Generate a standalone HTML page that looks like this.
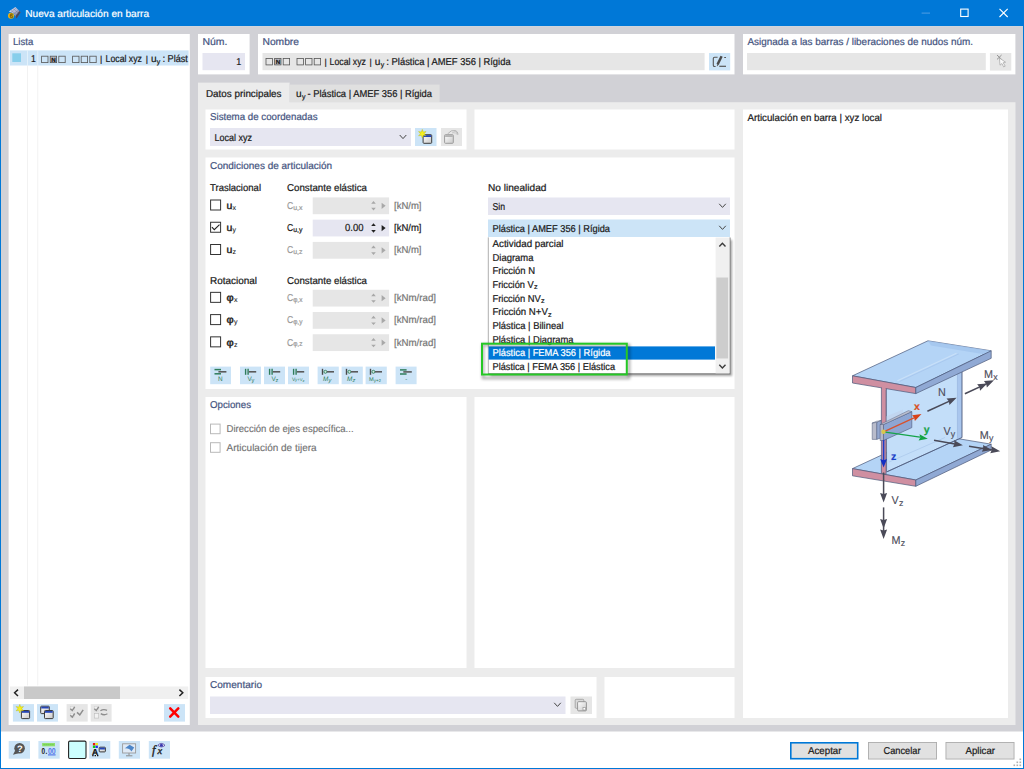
<!DOCTYPE html>
<html lang="es"><head><meta charset="utf-8"><title>Nueva articulación en barra</title>
<style>
html,body{margin:0;padding:0;background:#fff;overflow:hidden}
body{width:1024px;height:769px;position:relative}
svg{position:absolute;left:0;top:0;display:block;font-family:'Liberation Sans', sans-serif}
text{white-space:pre;text-rendering:geometricPrecision}
</style></head><body>
<svg width="1024" height="769" viewBox="0 0 1024 769">
<rect x="0" y="0" width="1024" height="769" fill="#0078d7" />
<rect x="1" y="26.2" width="1022" height="741.8" fill="#ffffff" />
<rect x="1" y="26.2" width="1022" height="705.3" fill="#d1d1d6" />
<text x="25.3" y="16.9" font-size="10.2" fill="#ffffff" text-anchor="start" textLength="123.8" lengthAdjust="spacingAndGlyphs" stroke="#ffffff" stroke-width="0.2">Nueva articulación en barra</text>
<rect x="8.6" y="34" width="181.2" height="691" fill="#ffffff" />
<text x="13" y="45" font-size="10" fill="#46557f" text-anchor="start" textLength="20.2" lengthAdjust="spacingAndGlyphs" stroke="#46557f" stroke-width="0.22" >Lista</text>
<rect x="10" y="50.4" width="178.6" height="15.1" fill="#cce4f7" />
<rect x="27" y="65.5" width="0.8" height="620.0" fill="#efefef" />
<rect x="37.4" y="65.5" width="0.8" height="620.0" fill="#efefef" />
<rect x="27" y="50.4" width="0.8" height="15.1" fill="#e9f4fc" />
<rect x="37.4" y="50.4" width="0.8" height="15.1" fill="#e9f4fc" />
<rect x="12.3" y="53.3" width="8.7" height="8.7" fill="#87ceeb" />
<text x="31" y="62" font-size="10" fill="#1a1a1a" text-anchor="start" textLength="4.8" lengthAdjust="spacingAndGlyphs" stroke="#1a1a1a" stroke-width="0.22" >1</text>
<rect x="198" y="34" width="51.6" height="40.4" fill="#ffffff" />
<text x="202.5" y="45.2" font-size="10" fill="#46557f" text-anchor="start" textLength="25" lengthAdjust="spacingAndGlyphs" stroke="#46557f" stroke-width="0.22" >Núm.</text>
<rect x="202.5" y="53" width="42.5" height="17.2" fill="#e6e6f1" />
<text x="236.2" y="65.1" font-size="10" fill="#1a1a1a" text-anchor="start" textLength="5" lengthAdjust="spacingAndGlyphs" stroke="#1a1a1a" stroke-width="0.22" >1</text>
<rect x="258" y="34" width="476.5" height="40.4" fill="#ffffff" />
<text x="262.5" y="45.2" font-size="10" fill="#46557f" text-anchor="start" textLength="36.5" lengthAdjust="spacingAndGlyphs" stroke="#46557f" stroke-width="0.22" >Nombre</text>
<rect x="262.5" y="53" width="442.1" height="17.2" fill="#e6e6e6" />
<rect x="709" y="53" width="21.2" height="17.4" fill="#cce4f7" />
<rect x="743" y="34" width="272.4" height="40.4" fill="#ffffff" />
<text x="747.5" y="45.2" font-size="10" fill="#46557f" text-anchor="start" textLength="225.5" lengthAdjust="spacingAndGlyphs" stroke="#46557f" stroke-width="0.22" >Asignada a las barras / liberaciones de nudos núm.</text>
<rect x="747" y="53" width="238.8" height="17.2" fill="#e6e6e6" />
<rect x="989.9" y="53" width="21.4" height="17.6" fill="#e6e6e6" />
<rect x="198" y="82.6" width="91.6" height="20.4" fill="#ececec" />
<rect x="289.6" y="84.6" width="150.0" height="17.6" fill="#e0e0e0" />
<rect x="198" y="102.2" width="817.5" height="622.8" fill="#ececec" />
<text x="206" y="97" font-size="10" fill="#1a1a1a" text-anchor="start" textLength="75.5" lengthAdjust="spacingAndGlyphs" stroke="#1a1a1a" stroke-width="0.22" >Datos principales</text>
<rect x="205.5" y="109.5" width="261.0" height="40.0" fill="#ffffff" />
<rect x="474.5" y="109.5" width="260.0" height="40.0" fill="#ffffff" />
<rect x="205.5" y="157.5" width="529.0" height="231.5" fill="#ffffff" />
<rect x="205.5" y="397" width="261.0" height="271" fill="#ffffff" />
<rect x="474.5" y="397" width="260.0" height="271" fill="#ffffff" />
<rect x="205.5" y="677" width="391.0" height="41" fill="#ffffff" />
<rect x="604.5" y="677" width="130.0" height="41" fill="#ffffff" />
<rect x="743" y="109.5" width="265" height="608.5" fill="#ffffff" />
<text x="210" y="120" font-size="10" fill="#46557f" text-anchor="start" textLength="107.5" lengthAdjust="spacingAndGlyphs" stroke="#46557f" stroke-width="0.22" >Sistema de coordenadas</text>
<rect x="210" y="128" width="201" height="18" fill="#e6e6f1" />
<text x="214.5" y="140.5" font-size="10" fill="#1a1a1a" text-anchor="start" textLength="37.5" lengthAdjust="spacingAndGlyphs" stroke="#1a1a1a" stroke-width="0.22" >Local xyz</text>
<rect x="415" y="128" width="21.5" height="18" fill="#cce4f7" />
<rect x="441" y="128" width="21" height="18" fill="#e6e6e6" />
<text x="210" y="168.8" font-size="10" fill="#46557f" text-anchor="start" textLength="122" lengthAdjust="spacingAndGlyphs" stroke="#46557f" stroke-width="0.22" >Condiciones de articulación</text>
<text x="210" y="191.3" font-size="10" fill="#1a1a1a" text-anchor="start" textLength="51" lengthAdjust="spacingAndGlyphs" stroke="#1a1a1a" stroke-width="0.22" >Traslacional</text>
<text x="287" y="191.3" font-size="10" fill="#1a1a1a" text-anchor="start" textLength="80" lengthAdjust="spacingAndGlyphs" stroke="#1a1a1a" stroke-width="0.22" >Constante elástica</text>
<text x="210" y="283.8" font-size="10" fill="#1a1a1a" text-anchor="start" textLength="47" lengthAdjust="spacingAndGlyphs" stroke="#1a1a1a" stroke-width="0.22" >Rotacional</text>
<text x="287" y="283.8" font-size="10" fill="#1a1a1a" text-anchor="start" textLength="80" lengthAdjust="spacingAndGlyphs" stroke="#1a1a1a" stroke-width="0.22" >Constante elástica</text>
<text x="488" y="191.3" font-size="10" fill="#1a1a1a" text-anchor="start" textLength="58.5" lengthAdjust="spacingAndGlyphs" stroke="#1a1a1a" stroke-width="0.22" >No linealidad</text>
<text x="210" y="408.3" font-size="10" fill="#46557f" text-anchor="start" textLength="41" lengthAdjust="spacingAndGlyphs" stroke="#46557f" stroke-width="0.22" >Opciones</text>
<text x="210" y="687.5" font-size="10" fill="#46557f" text-anchor="start" textLength="52" lengthAdjust="spacingAndGlyphs" stroke="#46557f" stroke-width="0.22" >Comentario</text>
<rect x="210" y="696.5" width="355.5" height="17.5" fill="#e6e6f1" />
<rect x="570.5" y="696.5" width="21.5" height="17.5" fill="#e6e6e6" />
<text x="747.5" y="121.3" font-size="10" fill="#1a1a1a" text-anchor="start" textLength="134.5" lengthAdjust="spacingAndGlyphs" stroke="#1a1a1a" stroke-width="0.22" >Articulación en barra | xyz local</text>
<rect x="41.6" y="56.199999999999996" width="6.4" height="6.4" fill="none" stroke="#555" stroke-width="0.8"/>
<rect x="50.2" y="56.199999999999996" width="6.4" height="6.4" fill="#bdbdc4" stroke="#555" stroke-width="0.8"/>
<rect x="58.8" y="56.199999999999996" width="6.4" height="6.4" fill="none" stroke="#555" stroke-width="0.8"/>
<rect x="72.6" y="56.199999999999996" width="6.4" height="6.4" fill="none" stroke="#555" stroke-width="0.8"/>
<rect x="81.2" y="56.199999999999996" width="6.4" height="6.4" fill="none" stroke="#555" stroke-width="0.8"/>
<rect x="89.8" y="56.199999999999996" width="6.4" height="6.4" fill="none" stroke="#555" stroke-width="0.8"/>
<text x="51.3" y="61.7" font-size="6.2" fill="#111" text-anchor="start" stroke="#111" stroke-width="0.22" font-weight="bold">N</text>
<text x="100" y="62" font-size="8.6" fill="#1a1a1a" text-anchor="start" stroke="#1a1a1a" stroke-width="0.22" >|</text>
<text x="105.6" y="62" font-size="10" fill="#1a1a1a" text-anchor="start" textLength="36.3" lengthAdjust="spacingAndGlyphs" stroke="#1a1a1a" stroke-width="0.22" >Local xyz</text>
<text x="145.7" y="62" font-size="8.6" fill="#1a1a1a" text-anchor="start" stroke="#1a1a1a" stroke-width="0.22" >|</text>
<text x="150.9" y="62" font-size="10" fill="#1a1a1a" text-anchor="start" textLength="5.6" lengthAdjust="spacingAndGlyphs" stroke="#1a1a1a" stroke-width="0.22" >u</text>
<text x="156.8" y="63.5" font-size="6.9" fill="#1a1a1a" text-anchor="start" stroke="#1a1a1a" stroke-width="0.22" >y</text>
<text x="162.4" y="62" font-size="10" fill="#1a1a1a" text-anchor="start" stroke="#1a1a1a" stroke-width="0.22" >:</text>
<text x="167.6" y="62" font-size="10" fill="#1a1a1a" text-anchor="start" textLength="20.3" lengthAdjust="spacingAndGlyphs" stroke="#1a1a1a" stroke-width="0.22" >Plást</text>
<rect x="266.0" y="58.5" width="6.4" height="6.4" fill="none" stroke="#555" stroke-width="0.8"/>
<rect x="274.6" y="58.5" width="6.4" height="6.4" fill="#bdbdc4" stroke="#555" stroke-width="0.8"/>
<rect x="283.2" y="58.5" width="6.4" height="6.4" fill="none" stroke="#555" stroke-width="0.8"/>
<rect x="297.0" y="58.5" width="6.4" height="6.4" fill="none" stroke="#555" stroke-width="0.8"/>
<rect x="305.6" y="58.5" width="6.4" height="6.4" fill="none" stroke="#555" stroke-width="0.8"/>
<rect x="314.2" y="58.5" width="6.4" height="6.4" fill="none" stroke="#555" stroke-width="0.8"/>
<text x="275.7" y="64.0" font-size="6.2" fill="#111" text-anchor="start" stroke="#111" stroke-width="0.22" font-weight="bold">N</text>
<text x="324.6" y="65.1" font-size="8.6" fill="#1a1a1a" text-anchor="start" stroke="#1a1a1a" stroke-width="0.22" >|</text>
<text x="329.6" y="65.1" font-size="10" fill="#1a1a1a" text-anchor="start" textLength="36.3" lengthAdjust="spacingAndGlyphs" stroke="#1a1a1a" stroke-width="0.22" >Local xyz</text>
<text x="369.5" y="65.1" font-size="8.6" fill="#1a1a1a" text-anchor="start" stroke="#1a1a1a" stroke-width="0.22" >|</text>
<text x="374.8" y="65.1" font-size="10" fill="#1a1a1a" text-anchor="start" textLength="5.6" lengthAdjust="spacingAndGlyphs" stroke="#1a1a1a" stroke-width="0.22" >u</text>
<text x="380.7" y="66.6" font-size="6.9" fill="#1a1a1a" text-anchor="start" stroke="#1a1a1a" stroke-width="0.22" >y</text>
<text x="386.2" y="65.1" font-size="10" fill="#1a1a1a" text-anchor="start" stroke="#1a1a1a" stroke-width="0.22" >:</text>
<text x="391.6" y="65.1" font-size="10" fill="#1a1a1a" text-anchor="start" textLength="119" lengthAdjust="spacingAndGlyphs" stroke="#1a1a1a" stroke-width="0.22" >Plástica | AMEF 356 | Rígida</text>
<text x="296" y="97" font-size="10" fill="#1a1a1a" text-anchor="start" textLength="5.6" lengthAdjust="spacingAndGlyphs" stroke="#1a1a1a" stroke-width="0.22" >u</text>
<text x="301.9" y="98.5" font-size="6.9" fill="#1a1a1a" text-anchor="start" stroke="#1a1a1a" stroke-width="0.22" >y</text>
<text x="307.6" y="97" font-size="10" fill="#1a1a1a" text-anchor="start" textLength="124.4" lengthAdjust="spacingAndGlyphs" stroke="#1a1a1a" stroke-width="0.22" >- Plástica | AMEF 356 | Rígida</text>
<path d="M399.7 135.0 L403 138.60000000000002 L406.3 135.0" fill="none" stroke="#444" stroke-width="1.0"/>
<path d="M554.2 702.8000000000001 L557.5 706.4 L560.8 702.8000000000001" fill="none" stroke="#444" stroke-width="1.0"/>
<rect x="210.6" y="200.0" width="10" height="10" fill="#fff" stroke="#333" stroke-width="1.0"/>
<text x="226.6" y="208.8" font-size="10" fill="#1a1a1a" text-anchor="start" textLength="5.8" lengthAdjust="spacingAndGlyphs" stroke="#1a1a1a" stroke-width="0.4">u</text>
<text x="232.6" y="209.8" font-size="7" fill="#1a1a1a" text-anchor="start" stroke="#1a1a1a" stroke-width="0.1">x</text>
<text x="287" y="208.8" font-size="10" fill="#9a9a9a" text-anchor="start" textLength="6.2" lengthAdjust="spacingAndGlyphs" stroke="#9a9a9a" stroke-width="0.22" >C</text>
<text x="293.2" y="209.6" font-size="7" fill="#9a9a9a" text-anchor="start" textLength="9.2" lengthAdjust="spacingAndGlyphs" stroke="#9a9a9a" stroke-width="0.22" >u,x</text>
<rect x="312.7" y="197.4" width="76.4" height="16.8" fill="#e6e6e6" />
<path d="M371.2 203.80 l2.3 -2.7 l2.3 2.7 z M371.2 207.80 l2.3 2.7 l2.3 -2.7 z" fill="#a8a8a8"/>
<path d="M381.6 202.70 l4 3.1 l-4 3.1 z" fill="#a8a8a8"/>
<text x="394" y="208.8" font-size="10" fill="#777" text-anchor="start" textLength="27.5" lengthAdjust="spacingAndGlyphs" stroke="#777" stroke-width="0.22" >[kN/m]</text>
<rect x="210.6" y="222.25" width="10" height="10" fill="#fff" stroke="#333" stroke-width="1.0"/>
<path d="M211.90 227.15 L214.30 229.65 L219.50 224.55" fill="none" stroke="#222" stroke-width="1.1"/>
<text x="226.6" y="231.05" font-size="10" fill="#1a1a1a" text-anchor="start" textLength="5.8" lengthAdjust="spacingAndGlyphs" stroke="#1a1a1a" stroke-width="0.4">u</text>
<text x="232.6" y="232.05" font-size="7" fill="#1a1a1a" text-anchor="start" stroke="#1a1a1a" stroke-width="0.1">y</text>
<text x="287" y="231.05" font-size="10" fill="#1a1a1a" text-anchor="start" textLength="6.2" lengthAdjust="spacingAndGlyphs" stroke="#1a1a1a" stroke-width="0.22" >C</text>
<text x="293.2" y="231.85" font-size="7" fill="#1a1a1a" text-anchor="start" textLength="9.2" lengthAdjust="spacingAndGlyphs" stroke="#1a1a1a" stroke-width="0.22" >u,y</text>
<rect x="312.7" y="219.65" width="76.4" height="16.8" fill="#e6e6f1" />
<path d="M371.2 226.05 l2.3 -2.7 l2.3 2.7 z M371.2 230.05 l2.3 2.7 l2.3 -2.7 z" fill="#222"/>
<path d="M381.6 224.95 l4 3.1 l-4 3.1 z" fill="#222"/>
<text x="345" y="231.05" font-size="10.2" fill="#1a1a1a" text-anchor="start" textLength="18.5" lengthAdjust="spacingAndGlyphs" stroke="#1a1a1a" stroke-width="0.22" >0.00</text>
<text x="394" y="231.05" font-size="10" fill="#1a1a1a" text-anchor="start" textLength="27.5" lengthAdjust="spacingAndGlyphs" stroke="#1a1a1a" stroke-width="0.22" >[kN/m]</text>
<rect x="210.6" y="244.5" width="10" height="10" fill="#fff" stroke="#333" stroke-width="1.0"/>
<text x="226.6" y="253.3" font-size="10" fill="#1a1a1a" text-anchor="start" textLength="5.8" lengthAdjust="spacingAndGlyphs" stroke="#1a1a1a" stroke-width="0.4">u</text>
<text x="232.6" y="254.3" font-size="7" fill="#1a1a1a" text-anchor="start" stroke="#1a1a1a" stroke-width="0.1">z</text>
<text x="287" y="253.3" font-size="10" fill="#9a9a9a" text-anchor="start" textLength="6.2" lengthAdjust="spacingAndGlyphs" stroke="#9a9a9a" stroke-width="0.22" >C</text>
<text x="293.2" y="254.1" font-size="7" fill="#9a9a9a" text-anchor="start" textLength="9.2" lengthAdjust="spacingAndGlyphs" stroke="#9a9a9a" stroke-width="0.22" >u,z</text>
<rect x="312.7" y="241.9" width="76.4" height="16.8" fill="#e6e6e6" />
<path d="M371.2 248.30 l2.3 -2.7 l2.3 2.7 z M371.2 252.30 l2.3 2.7 l2.3 -2.7 z" fill="#a8a8a8"/>
<path d="M381.6 247.20 l4 3.1 l-4 3.1 z" fill="#a8a8a8"/>
<text x="394" y="253.3" font-size="10" fill="#777" text-anchor="start" textLength="27.5" lengthAdjust="spacingAndGlyphs" stroke="#777" stroke-width="0.22" >[kN/m]</text>
<rect x="210.6" y="292.35" width="10" height="10" fill="#fff" stroke="#333" stroke-width="1.0"/>
<text x="226.6" y="301.15" font-size="10" fill="#1a1a1a" text-anchor="start" textLength="7.2" lengthAdjust="spacingAndGlyphs" stroke="#1a1a1a" stroke-width="0.4">φ</text>
<text x="234.0" y="302.15" font-size="7" fill="#1a1a1a" text-anchor="start" stroke="#1a1a1a" stroke-width="0.1">x</text>
<text x="287" y="301.15" font-size="10" fill="#9a9a9a" text-anchor="start" textLength="6.2" lengthAdjust="spacingAndGlyphs" stroke="#9a9a9a" stroke-width="0.22" >C</text>
<text x="293.2" y="301.95" font-size="7" fill="#9a9a9a" text-anchor="start" textLength="9.2" lengthAdjust="spacingAndGlyphs" stroke="#9a9a9a" stroke-width="0.22" >φ,x</text>
<rect x="312.7" y="289.75" width="76.4" height="16.8" fill="#e6e6e6" />
<path d="M371.2 296.15 l2.3 -2.7 l2.3 2.7 z M371.2 300.15 l2.3 2.7 l2.3 -2.7 z" fill="#a8a8a8"/>
<path d="M381.6 295.05 l4 3.1 l-4 3.1 z" fill="#a8a8a8"/>
<text x="394" y="301.15" font-size="10" fill="#777" text-anchor="start" textLength="42" lengthAdjust="spacingAndGlyphs" stroke="#777" stroke-width="0.22" >[kNm/rad]</text>
<rect x="210.6" y="314.6" width="10" height="10" fill="#fff" stroke="#333" stroke-width="1.0"/>
<text x="226.6" y="323.4" font-size="10" fill="#1a1a1a" text-anchor="start" textLength="7.2" lengthAdjust="spacingAndGlyphs" stroke="#1a1a1a" stroke-width="0.4">φ</text>
<text x="234.0" y="324.4" font-size="7" fill="#1a1a1a" text-anchor="start" stroke="#1a1a1a" stroke-width="0.1">y</text>
<text x="287" y="323.4" font-size="10" fill="#9a9a9a" text-anchor="start" textLength="6.2" lengthAdjust="spacingAndGlyphs" stroke="#9a9a9a" stroke-width="0.22" >C</text>
<text x="293.2" y="324.2" font-size="7" fill="#9a9a9a" text-anchor="start" textLength="9.2" lengthAdjust="spacingAndGlyphs" stroke="#9a9a9a" stroke-width="0.22" >φ,y</text>
<rect x="312.7" y="312" width="76.4" height="16.8" fill="#e6e6e6" />
<path d="M371.2 318.40 l2.3 -2.7 l2.3 2.7 z M371.2 322.40 l2.3 2.7 l2.3 -2.7 z" fill="#a8a8a8"/>
<path d="M381.6 317.30 l4 3.1 l-4 3.1 z" fill="#a8a8a8"/>
<text x="394" y="323.4" font-size="10" fill="#777" text-anchor="start" textLength="42" lengthAdjust="spacingAndGlyphs" stroke="#777" stroke-width="0.22" >[kNm/rad]</text>
<rect x="210.6" y="336.85" width="10" height="10" fill="#fff" stroke="#333" stroke-width="1.0"/>
<text x="226.6" y="345.65" font-size="10" fill="#1a1a1a" text-anchor="start" textLength="7.2" lengthAdjust="spacingAndGlyphs" stroke="#1a1a1a" stroke-width="0.4">φ</text>
<text x="234.0" y="346.65" font-size="7" fill="#1a1a1a" text-anchor="start" stroke="#1a1a1a" stroke-width="0.1">z</text>
<text x="287" y="345.65" font-size="10" fill="#9a9a9a" text-anchor="start" textLength="6.2" lengthAdjust="spacingAndGlyphs" stroke="#9a9a9a" stroke-width="0.22" >C</text>
<text x="293.2" y="346.45" font-size="7" fill="#9a9a9a" text-anchor="start" textLength="9.2" lengthAdjust="spacingAndGlyphs" stroke="#9a9a9a" stroke-width="0.22" >φ,z</text>
<rect x="312.7" y="334.25" width="76.4" height="16.8" fill="#e6e6e6" />
<path d="M371.2 340.65 l2.3 -2.7 l2.3 2.7 z M371.2 344.65 l2.3 2.7 l2.3 -2.7 z" fill="#a8a8a8"/>
<path d="M381.6 339.55 l4 3.1 l-4 3.1 z" fill="#a8a8a8"/>
<text x="394" y="345.65" font-size="10" fill="#777" text-anchor="start" textLength="42" lengthAdjust="spacingAndGlyphs" stroke="#777" stroke-width="0.22" >[kNm/rad]</text>
<rect x="488" y="197.5" width="242" height="17.5" fill="#e6e6f1" />
<text x="492.5" y="210.3" font-size="10" fill="#1a1a1a" text-anchor="start" textLength="12.5" lengthAdjust="spacingAndGlyphs" stroke="#1a1a1a" stroke-width="0.22" >Sin</text>
<rect x="488" y="219.5" width="242" height="17.5" fill="#cce4f7" />
<text x="492.5" y="232.3" font-size="10" fill="#1a1a1a" text-anchor="start" textLength="117.5" lengthAdjust="spacingAndGlyphs" stroke="#1a1a1a" stroke-width="0.22" >Plástica | AMEF 356 | Rígida</text>
<path d="M719.2 203.79999999999998 L722.5 207.4 L725.8 203.79999999999998" fill="none" stroke="#444" stroke-width="1.0"/>
<path d="M719.2 225.79999999999998 L722.5 229.4 L725.8 225.79999999999998" fill="none" stroke="#444" stroke-width="1.0"/>
<defs><filter id="sh" x="-10%" y="-10%" width="125%" height="130%"><feGaussianBlur stdDeviation="1.6"/></filter><filter id="sh2" x="-10%" y="-10%" width="125%" height="130%"><feGaussianBlur stdDeviation="1.1"/></filter></defs>
<rect x="490.5" y="240" width="241.6" height="136" fill="#000" opacity="0.34" filter="url(#sh2)"/>
<rect x="488" y="237" width="242" height="136.9" fill="#ffffff" />
<path d="M488.3 237.4 V373.9" stroke="#a6a6a6" stroke-width="0.9" fill="none"/>
<path d="M488 373.9 H730 V237.6" stroke="#808080" stroke-width="1.1" fill="none"/>
<text x="492.5" y="247.1" font-size="10" fill="#1a1a1a" text-anchor="start" textLength="71" lengthAdjust="spacingAndGlyphs" stroke="#1a1a1a" stroke-width="0.22" >Actividad parcial</text>
<text x="492.5" y="260.76" font-size="10" fill="#1a1a1a" text-anchor="start" textLength="41" lengthAdjust="spacingAndGlyphs" stroke="#1a1a1a" stroke-width="0.22" >Diagrama</text>
<text x="492.5" y="274.42" font-size="10" fill="#1a1a1a" text-anchor="start" textLength="42.5" lengthAdjust="spacingAndGlyphs" stroke="#1a1a1a" stroke-width="0.22" >Fricción N</text>
<text x="492.5" y="288.08" font-size="10" fill="#1a1a1a" text-anchor="start" textLength="41.3" lengthAdjust="spacingAndGlyphs" stroke="#1a1a1a" stroke-width="0.22" >Fricción V</text>
<text x="534.0" y="289.28" font-size="7.2" fill="#1a1a1a" text-anchor="start" stroke="#1a1a1a" stroke-width="0.22" >z</text>
<text x="492.5" y="301.74" font-size="10" fill="#1a1a1a" text-anchor="start" textLength="48.3" lengthAdjust="spacingAndGlyphs" stroke="#1a1a1a" stroke-width="0.22" >Fricción NV</text>
<text x="541.0" y="302.94" font-size="7.2" fill="#1a1a1a" text-anchor="start" stroke="#1a1a1a" stroke-width="0.22" >z</text>
<text x="492.5" y="315.4" font-size="10" fill="#1a1a1a" text-anchor="start" textLength="55.3" lengthAdjust="spacingAndGlyphs" stroke="#1a1a1a" stroke-width="0.22" >Fricción N+V</text>
<text x="548.0" y="316.6" font-size="7.2" fill="#1a1a1a" text-anchor="start" stroke="#1a1a1a" stroke-width="0.22" >z</text>
<text x="492.5" y="329.06" font-size="10" fill="#1a1a1a" text-anchor="start" textLength="71" lengthAdjust="spacingAndGlyphs" stroke="#1a1a1a" stroke-width="0.22" >Plástica | Bilineal</text>
<text x="492.5" y="342.72" font-size="10" fill="#1a1a1a" text-anchor="start" textLength="81" lengthAdjust="spacingAndGlyphs" stroke="#1a1a1a" stroke-width="0.22" >Plástica | Diagrama</text>
<rect x="488.6" y="346.4" width="226.4" height="13.2" fill="#0078d7" />
<text x="492.5" y="356.38" font-size="10" fill="#ffffff" text-anchor="start" textLength="118" lengthAdjust="spacingAndGlyphs" stroke="#ffffff" stroke-width="0.22" >Plástica | FEMA 356 | Rígida</text>
<text x="492.5" y="370.04" font-size="10" fill="#1a1a1a" text-anchor="start" textLength="122.5" lengthAdjust="spacingAndGlyphs" stroke="#1a1a1a" stroke-width="0.22" >Plástica | FEMA 356 | Elástica</text>
<rect x="715.6" y="237.6" width="13.8" height="135.7" fill="#f0f0f0" />
<rect x="716.4" y="277.5" width="11.7" height="81.0" fill="#cdcdcd" />
<path d="M719.3 246.4 L722.4 243.2 L725.5 246.4" fill="none" stroke="#3c3c3c" stroke-width="1.4"/>
<path d="M719.3 364.8 L722.4 368 L725.5 364.8" fill="none" stroke="#3c3c3c" stroke-width="1.4"/>
<rect x="483" y="345" width="146" height="33" fill="none" stroke="#000" stroke-width="2.4" opacity="0.35" filter="url(#sh)"/>
<rect x="482" y="343.7" width="144.8" height="30.8" fill="none" stroke="#25c825" stroke-width="2"/>
<rect x="210.5" y="424.1" width="9.6" height="9.6" fill="#fff" stroke="#b9b9b9" stroke-width="1.0"/>
<rect x="210.5" y="442.7" width="9.6" height="9.6" fill="#fff" stroke="#b9b9b9" stroke-width="1.0"/>
<text x="226.6" y="432.2" font-size="10" fill="#707070" text-anchor="start" textLength="127" lengthAdjust="spacingAndGlyphs" stroke="#707070" stroke-width="0.12">Dirección de ejes específica...</text>
<text x="226.6" y="451" font-size="10" fill="#707070" text-anchor="start" textLength="90" lengthAdjust="spacingAndGlyphs" stroke="#707070" stroke-width="0.12">Articulación de tijera</text>
<rect x="790" y="742" width="68.5" height="17.5" fill="#0078d7" />
<rect x="791.6" y="743.6" width="65.3" height="14.3" fill="#e1e1e1" />
<text x="808" y="754.1" font-size="10" fill="#1a1a1a" text-anchor="start" textLength="33.5" lengthAdjust="spacingAndGlyphs" stroke="#1a1a1a" stroke-width="0.22" >Aceptar</text>
<rect x="868" y="742" width="69" height="17.5" fill="#adadad" />
<rect x="868.9" y="742.9" width="67.2" height="15.7" fill="#e1e1e1" />
<text x="883.5" y="754.1" font-size="10" fill="#1a1a1a" text-anchor="start" textLength="37" lengthAdjust="spacingAndGlyphs" stroke="#1a1a1a" stroke-width="0.22" >Cancelar</text>
<rect x="945.5" y="742" width="69.0" height="17.5" fill="#adadad" />
<rect x="946.4" y="742.9" width="67.2" height="15.7" fill="#e1e1e1" />
<text x="965.5" y="754.1" font-size="10" fill="#1a1a1a" text-anchor="start" textLength="29.5" lengthAdjust="spacingAndGlyphs" stroke="#1a1a1a" stroke-width="0.22" >Aplicar</text>
<rect x="1019.5" y="758.5" width="1.6" height="1.6" fill="#b0b0b0"/>
<rect x="1019.5" y="761.5" width="1.6" height="1.6" fill="#b0b0b0"/>
<rect x="1019.5" y="764.5" width="1.6" height="1.6" fill="#b0b0b0"/>
<rect x="1016.5" y="761.5" width="1.6" height="1.6" fill="#b0b0b0"/>
<rect x="1016.5" y="764.5" width="1.6" height="1.6" fill="#b0b0b0"/>
<rect x="1013.5" y="764.5" width="1.6" height="1.6" fill="#b0b0b0"/>
<rect x="8.7" y="741" width="21.3" height="17.7" fill="#cce4f7" />
<rect x="38.4" y="741" width="21.3" height="17.7" fill="#cce4f7" />
<rect x="89.2" y="741" width="21.1" height="17.7" fill="#cce4f7" />
<rect x="118.8" y="741" width="21.2" height="17.7" fill="#cce4f7" />
<rect x="148.8" y="741" width="21.2" height="17.7" fill="#cce4f7" />
<rect x="68.6" y="741.1" width="17.4" height="17.4" rx="1.2" fill="#ccffff" stroke="#222" stroke-width="1.1"/>
<rect x="10" y="686.5" width="178.2" height="12.5" fill="#f0f0f0" />
<rect x="24" y="686.5" width="96" height="12.5" fill="#c9c9c9" />
<path d="M18 689.6 L14.6 692.8 L18 696" fill="none" stroke="#222" stroke-width="1.5"/>
<path d="M179.4 689.6 L182.8 692.8 L179.4 696" fill="none" stroke="#222" stroke-width="1.5"/>
<rect x="12.9" y="704.1" width="21.1" height="17.5" fill="#cce4f7" />
<rect x="37" y="704.1" width="21" height="17.5" fill="#cce4f7" />
<rect x="66.6" y="704.1" width="21.1" height="17.5" fill="#e6e6e6" />
<rect x="90.7" y="704.1" width="20.9" height="17.5" fill="#e6e6e6" />
<rect x="164" y="704.1" width="21" height="17.5" fill="#cce4f7" />
<g>
<polygon points="852.5,468.6 927.9,433.6 991.2,444.2 915.8,480" fill="#b4d4f6" stroke="#4b5878" stroke-width="0.7" stroke-linejoin="round" />
<polygon points="852.5,468.6 915.8,480 915.8,486.3 852.5,475.8" fill="#cf8fa1" stroke="#4b5878" stroke-width="0.7" stroke-linejoin="round" />
<polygon points="915.8,480 991.2,444.2 991.2,450 915.8,486.3" fill="#90a9d4" stroke="#4b5878" stroke-width="0.7" stroke-linejoin="round" />
<polygon points="886.3,388.7 961.9,353.7 961.9,437.5 886.6,471.9" fill="#c3def9" stroke="#4b5878" stroke-width="0.6" stroke-linejoin="round" />
<polygon points="957.4,356 961.9,353.7 961.9,437.5 957.4,439.8" fill="#a9c6ee" stroke="none" stroke-width="0" stroke-linejoin="round" />
<line x1="961.9" y1="370" x2="961.9" y2="437.5" stroke="#4b5878" stroke-width="0.7" />
<line x1="957.4" y1="372" x2="957.4" y2="439.6" stroke="#8fa9d6" stroke-width="0.5" />
<line x1="887.2" y1="471.7" x2="961.9" y2="437.5" stroke="#4b5878" stroke-width="0.8" />
<line x1="889" y1="462" x2="945" y2="437.5" stroke="#a5c2e8" stroke-width="0.6" />
<polygon points="881.4,387.6 886.1,388.4 886.1,474.2 881.4,473.4" fill="#cf8fa1" stroke="#4b5878" stroke-width="0.7" stroke-linejoin="round" />
<polygon points="852.5,375.8 927.9,340.8 991.2,350.8 915.8,387.5" fill="#b4d4f6" stroke="#4b5878" stroke-width="0.7" stroke-linejoin="round" />
<polygon points="927.9,340.8 991.2,350.8 984,354.2 931,345.6" fill="#a3c4ee" stroke="none" stroke-width="0" stroke-linejoin="round" opacity="0.8"/>
<line x1="897.4" y1="380.8" x2="956.5" y2="353.3" stroke="#c9e0f8" stroke-width="1.2" />
<line x1="899.8" y1="381.4" x2="958.9" y2="353.9" stroke="#9fbde6" stroke-width="0.5" />
<polygon points="852.5,375.8 915.8,387.5 915.8,393.6 852.5,383" fill="#cf8fa1" stroke="#4b5878" stroke-width="0.7" stroke-linejoin="round" />
<polygon points="915.8,387.5 991.2,350.8 991.2,358.3 915.8,393.6" fill="#90a9d4" stroke="#4b5878" stroke-width="0.7" stroke-linejoin="round" />
<polygon points="881.9,386.6 885.7,387.2 885.7,390 881.9,389.4" fill="#cf8fa1" stroke="none" stroke-width="0" stroke-linejoin="round" />
<line x1="927.4" y1="411.3" x2="950.56" y2="400.59" stroke="#4a4a58" stroke-width="1.5" />
<polygon points="956.60,397.80 949.45,404.96 948.88,401.37 946.51,398.61" fill="#4a4a58"/>
<line x1="964.9" y1="393.8" x2="987.97" y2="383.1" stroke="#4a4a58" stroke-width="1.5" />
<polygon points="994.00,380.30 986.86,387.47 986.29,383.88 983.91,381.12" fill="#4a4a58"/>
<polygon points="987.20,383.46 980.05,390.63 979.49,387.03 977.11,384.28" fill="#4a4a58"/>
<line x1="934" y1="440.3" x2="956.35" y2="444.17" stroke="#4a4a58" stroke-width="1.5" />
<polygon points="962.90,445.30 952.94,447.13 954.52,443.85 954.14,440.23" fill="#4a4a58"/>
<line x1="969" y1="446.2" x2="993.64" y2="450.23" stroke="#4a4a58" stroke-width="1.5" />
<polygon points="1000.20,451.30 990.26,453.22 991.81,449.93 991.39,446.31" fill="#4a4a58"/>
<polygon points="991.81,449.93 981.87,451.85 983.42,448.56 983.00,444.94" fill="#4a4a58"/>
<line x1="883.6" y1="472.5" x2="883.6" y2="495.75" stroke="#4a4a58" stroke-width="1.5" />
<polygon points="883.60,502.40 880.10,492.90 883.60,493.90 887.10,492.90" fill="#4a4a58"/>
<line x1="883.6" y1="507.4" x2="883.6" y2="532.35" stroke="#4a4a58" stroke-width="1.5" />
<polygon points="883.60,539.00 880.10,529.50 883.60,530.50 887.10,529.50" fill="#4a4a58"/>
<polygon points="883.60,528.50 880.10,519.00 883.60,520.00 887.10,519.00" fill="#4a4a58"/>
<polygon points="895,418.2 903,415 903,409.5 886.5,416.2 886.5,421.5" fill="#c2d3ec" stroke="none" stroke-width="0" stroke-linejoin="round" opacity="0.7"/>
<polygon points="872.2,423 876.8,422.2 876.8,439.4 872.2,439.4" fill="#b9bccb" stroke="#4b5878" stroke-width="0.5" stroke-linejoin="round" />
<polygon points="876.8,422.2 881.2,420.4 881.2,437.8 876.8,439.4" fill="#93a7cf" stroke="#4b5878" stroke-width="0.5" stroke-linejoin="round" />
<polygon points="872.2,423 876.6,421.2 881.2,420.4 876.8,422.2" fill="#c9ccd8" stroke="#4b5878" stroke-width="0.4" stroke-linejoin="round" />
<polygon points="883.5,424.5 911.8,411.6 911.8,427.6 883.5,440.5" fill="#8ea6d3" stroke="#4b5878" stroke-width="0.6" stroke-linejoin="round" />
<polygon points="880.1,424.5 883.5,424.5 883.5,440.5 880.1,440.5" fill="#b3b6c9" stroke="#4b5878" stroke-width="0.5" stroke-linejoin="round" />
<polygon points="880.1,424.5 908.4,410.6 911.8,411.6 883.5,424.5" fill="#b9bdcd" stroke="#4b5878" stroke-width="0.4" stroke-linejoin="round" />
<line x1="883.6" y1="440" x2="883.6" y2="461" stroke="#1a3ec8" stroke-width="1.6" />
<polygon points="883.6,467.4 880.2,459 883.6,460.2 887,459" fill="#1230c4"/>
<line x1="883.6" y1="431.8" x2="914" y2="417.9" stroke="#d8512c" stroke-width="1.3" />
<polygon points="921.5,414.1 912.2,415.2 914.1,417.8 914.9,420.9" fill="#d8421a"/>
<line x1="883.6" y1="431.8" x2="920" y2="437.2" stroke="#16a44a" stroke-width="1.3" />
<polygon points="927.8,438.7 919.5,434.2 920.3,437.4 918.6,440.4" fill="#12a244"/>
<circle cx="883.5" cy="431.8" r="2.2" fill="#d9c64c"/>
</g>
<text x="938" y="396" font-size="11.4" fill="#4a4a58" text-anchor="start" textLength="7.8" lengthAdjust="spacingAndGlyphs"  stroke="#4a4a58" stroke-width="0.12">N</text>
<text x="984.1" y="378.4" font-size="11.4" fill="#4a4a58" text-anchor="start" textLength="9" lengthAdjust="spacingAndGlyphs"  stroke="#4a4a58" stroke-width="0.12">M</text>
<text x="993.3" y="380.0" font-size="8.8" fill="#4a4a58" text-anchor="start"  stroke="#4a4a58" stroke-width="0.12">x</text>
<text x="943.4" y="435" font-size="11.4" fill="#4a4a58" text-anchor="start" textLength="7.2" lengthAdjust="spacingAndGlyphs"  stroke="#4a4a58" stroke-width="0.12">V</text>
<text x="950.8" y="436.6" font-size="8.8" fill="#4a4a58" text-anchor="start"  stroke="#4a4a58" stroke-width="0.12">y</text>
<text x="979.8" y="439.2" font-size="11.4" fill="#4a4a58" text-anchor="start" textLength="9" lengthAdjust="spacingAndGlyphs"  stroke="#4a4a58" stroke-width="0.12">M</text>
<text x="989.0" y="440.8" font-size="8.8" fill="#4a4a58" text-anchor="start"  stroke="#4a4a58" stroke-width="0.12">y</text>
<text x="891.6" y="504.2" font-size="11.4" fill="#4a4a58" text-anchor="start" textLength="7.2" lengthAdjust="spacingAndGlyphs"  stroke="#4a4a58" stroke-width="0.12">V</text>
<text x="899.0" y="505.8" font-size="8.8" fill="#4a4a58" text-anchor="start"  stroke="#4a4a58" stroke-width="0.12">z</text>
<text x="891.6" y="544.4" font-size="11.4" fill="#4a4a58" text-anchor="start" textLength="9" lengthAdjust="spacingAndGlyphs"  stroke="#4a4a58" stroke-width="0.12">M</text>
<text x="900.8" y="546.0" font-size="8.8" fill="#4a4a58" text-anchor="start"  stroke="#4a4a58" stroke-width="0.12">z</text>
<text x="913.9" y="410.4" font-size="10.5" fill="#d8501e" text-anchor="start" stroke="#d8501e" stroke-width="0.22" font-weight="bold">x</text>
<text x="923.7" y="432.6" font-size="10.5" fill="#16a44a" text-anchor="start" stroke="#16a44a" stroke-width="0.22" font-weight="bold">y</text>
<text x="890.9" y="459.6" font-size="10.5" fill="#1a3ec8" text-anchor="start" stroke="#1a3ec8" stroke-width="0.22" font-weight="bold">z</text>
<defs><linearGradient id="wg" x1="0" y1="0" x2="1" y2="1"><stop offset="0" stop-color="#ffffff"/><stop offset="1" stop-color="#c8c8c8"/></linearGradient><linearGradient id="cube" x1="0" y1="0" x2="1" y2="1"><stop offset="0" stop-color="#f0f2fb"/><stop offset="0.5" stop-color="#a9b1d2"/><stop offset="1" stop-color="#4a5070"/></linearGradient></defs>
<polygon points="8.8,11.6 15.4,6.9 20.7,12.2 16.6,18.4 13.4,13.6" fill="url(#cube)"/>
<path d="M11 10.2 L17.6 15.6 M13.2 8.6 L19.2 13.8 M10.6 12.6 L16.4 7.8 M13.6 14 L18.8 9.8" stroke="#5d6484" stroke-width="0.5" opacity="0.7" fill="none"/>
<polygon points="20.7,12.2 16.6,18.4 15.4,16.2 19.3,11" fill="#3a3f58" opacity="0.85"/>
<circle cx="11" cy="15.7" r="3" fill="#e8b818"/>
<text x="9.4" y="17.9" font-size="6.4" fill="#7a5a00" text-anchor="start" stroke="#7a5a00" stroke-width="0.22" font-weight="bold">6</text>
<line x1="921.6" y1="13.1" x2="930" y2="13.1" stroke="#4f9ee3" stroke-width="1" />
<rect x="960.7" y="9.1" width="7.4" height="7.4" fill="none" stroke="#fff" stroke-width="1.1"/>
<path d="M999.5 8.8 L1007.7 17 M1007.7 8.8 L999.5 17" stroke="#fff" stroke-width="1.1" fill="none"/>
<path d="M717.6 57.3 H714.6 Q713.3 57.3 713.3 58.6 V65.2 Q713.3 66.5 714.6 66.5 H715.6" fill="none" stroke="#555" stroke-width="1.1"/>
<line x1="721.6" y1="56.2" x2="717.6" y2="64.4" stroke="#4a4a4a" stroke-width="2.4" />
<polygon points="717.0,64.0 718.6,64.8 716.9,66.4" fill="#555"/>
<line x1="719.3" y1="66.3" x2="726" y2="66.3" stroke="#555" stroke-width="1.2" />
<line x1="724.2" y1="57.5" x2="726" y2="57.5" stroke="#555" stroke-width="1.1" />
<path d="M997 55 L1001.6 59.4 M1001.6 55 L997 59.4" stroke="#8a8a8a" stroke-width="0.9" fill="none"/>
<polygon points="999.4,58 1005.6,62.2 1003.2,62.7 1005.2,66.2 1003.7,66.9 1001.9,63.5 1000,65.2" fill="#fafafa" stroke="#a2a2a2" stroke-width="0.7"/>
<rect x="423.1" y="134.7" width="8.6" height="8.6" rx="0.8" fill="url(#wg)" stroke="#3c3c3c" stroke-width="1"/>
<rect x="423.6" y="135.1" width="7.6" height="1.9" fill="#2546b8"/>
<polygon points="422.30,129.40 423.25,132.05 426.02,131.55 424.20,133.70 426.02,135.85 423.25,135.35 422.30,138.00 421.35,135.35 418.58,135.85 420.40,133.70 418.58,131.55 421.35,132.05" fill="#f6f020" stroke="#b8b400" stroke-width="0.4"/>
<rect x="444.6" y="134.7" width="8.7" height="8.6" rx="0.8" fill="url(#wg)" stroke="#9c9c9c" stroke-width="1"/>
<rect x="445.1" y="135.1" width="7.7" height="1.9" fill="#b4b4b4"/>
<path d="M447.5 134 Q451 129.5 455.5 130.5 Q458 131.5 458 134.5" fill="none" stroke="#b5b5b5" stroke-width="1"/>
<path d="M452 133 L456 131 L457.5 135" fill="#d8d8d8" stroke="#b5b5b5" stroke-width="0.6"/>
<rect x="575.2" y="699.3" width="8.6" height="9" rx="1" fill="#d9d9d9" stroke="#9a9a9a" stroke-width="0.8"/>
<rect x="577.6" y="701.7" width="8.8" height="9.2" rx="1" fill="url(#wg)" stroke="#8c8c8c" stroke-width="0.9"/>
<rect x="583" y="707.4" width="2.6" height="2.6" fill="#fff" stroke="#8c8c8c" stroke-width="0.6"/>
<rect x="21.4" y="710.5" width="8.2" height="8.1" rx="0.8" fill="url(#wg)" stroke="#3c3c3c" stroke-width="1"/>
<rect x="21.9" y="710.9" width="7.2" height="1.9" fill="#2546b8"/>
<polygon points="19.80,704.40 20.75,707.05 23.52,706.55 21.70,708.70 23.52,710.85 20.75,710.35 19.80,713.00 18.85,710.35 16.08,710.85 17.90,708.70 16.08,706.55 18.85,707.05" fill="#f6f020" stroke="#b8b400" stroke-width="0.4"/>
<rect x="40.7" y="706.2" width="8.6" height="7.4" rx="0.8" fill="url(#wg)" stroke="#3c3c3c" stroke-width="1"/>
<rect x="41.2" y="706.6" width="7.6" height="1.9" fill="#2546b8"/>
<rect x="44.5" y="710.5" width="8.7" height="8.1" rx="0.8" fill="url(#wg)" stroke="#3c3c3c" stroke-width="1"/>
<rect x="45" y="710.9" width="7.7" height="1.9" fill="#2546b8"/>
<rect x="70.2" y="706.6" width="4.4" height="4.4" fill="#efefef" stroke="#cfcfcf" stroke-width="0.5"/>
<rect x="70.2" y="713.2" width="4.4" height="4.4" fill="#efefef" stroke="#cfcfcf" stroke-width="0.5"/>
<path d="M70.3 708.6999999999999 L72.3 710.5 L74.7 706.9" fill="none" stroke="#8d8d8d" stroke-width="1.4"/>
<path d="M70.3 715.3 L72.3 717.1 L74.7 713.5" fill="none" stroke="#8d8d8d" stroke-width="1.4"/>
<path d="M77 712.3199999999999 L79.8 714.8399999999999 L83.16 709.8" fill="none" stroke="#8d8d8d" stroke-width="1.5"/>
<rect x="94.2" y="706.6" width="4.4" height="4.4" fill="#efefef" stroke="#cfcfcf" stroke-width="0.5"/>
<path d="M94.3 708.6999999999999 L96.3 710.5 L98.7 706.9" fill="none" stroke="#8d8d8d" stroke-width="1.4"/>
<rect x="94.4" y="713.6" width="4.3" height="4.5" fill="#f2f2f2" stroke="#bdbdbd" stroke-width="0.6"/>
<path d="M100.4 710.8 Q103.5 708.6 107 710.4" fill="none" stroke="#8d8d8d" stroke-width="1.3"/>
<path d="M100.8 713.6 Q104 715.8 107.4 713.8" fill="none" stroke="#8d8d8d" stroke-width="1.3"/>
<path d="M170.2 708.4 L178.3 716.7 M178.3 708.4 L170.2 716.7" stroke="#ff0000" stroke-width="2.5" stroke-linecap="round" fill="none"/>
<circle cx="19.6" cy="748.3" r="5.3" fill="#555"/>
<polygon points="15.2,750.6 13,754.8 18.6,753.2" fill="#555"/>
<text x="17" y="751.7" font-size="9.4" fill="#ffffff" text-anchor="start" font-weight="bold" stroke="none">?</text>
<rect x="42.1" y="743" width="12.9" height="3.3" fill="#8fe06e" />
<path d="M43.5 744.6 H54" stroke="#6fc850" stroke-width="1.2" stroke-dasharray="1.2 0.8"/>
<text x="41.6" y="753.7" font-size="8.6" fill="#1a1a1a" text-anchor="start" textLength="3.6" lengthAdjust="spacingAndGlyphs" font-weight="bold" stroke="none">0</text>
<text x="45.4" y="753.7" font-size="8.6" fill="#1a1a1a" text-anchor="start" textLength="1.8" lengthAdjust="spacingAndGlyphs" font-weight="bold" stroke="none">.</text>
<text x="47.9" y="753.7" font-size="8.6" fill="#5578ea" text-anchor="start" textLength="7.8" lengthAdjust="spacingAndGlyphs" font-weight="bold" stroke="none">00</text>
<path d="M48 754.9 H55.6" stroke="#4a6fe8" stroke-width="1.1"/>
<rect x="92.9" y="743" width="2.4" height="2.4" fill="#ee1111" />
<rect x="95.5" y="743" width="2.4" height="2.4" fill="#eeee11" />
<rect x="92.9" y="745.6" width="2.4" height="2.4" fill="#11cc11" />
<rect x="95.5" y="745.6" width="2.4" height="2.4" fill="#2233ee" />
<text x="92.1" y="755" font-size="8.6" fill="#111" text-anchor="start" stroke="#111" stroke-width="0.22" font-weight="bold">A</text>
<path d="M92.2 755.6 H98.6" stroke="#111" stroke-width="1.2" stroke-dasharray="1.4 1"/>
<rect x="99.2" y="747.2" width="6.2" height="4.7" rx="0.8" fill="url(#wg)" stroke="#3c3c3c" stroke-width="1"/>
<rect x="99.7" y="747.6" width="5.2" height="1.9" fill="#2546b8"/>
<rect x="122.6" y="743.8" width="13" height="9.2" fill="#dfeaf6" stroke="#9a9a9a" stroke-width="0.9"/>
<path d="M124.6 748.4 L129.6 744.8 L134.2 747.6 L131.4 751.6 Q129.4 748 124.6 748.4 Z" fill="#4d86c8"/>
<path d="M129 753.2 V755.4 M126 755.8 H132.4" stroke="#8a8a8a" stroke-width="1" fill="none"/>
<text x="152" y="753.6" font-size="12.5" fill="#222" text-anchor="start" font-family="Liberation Serif, serif" font-style="italic" stroke="#222" stroke-width="0.35">f</text>
<text x="157.4" y="754" font-size="10.5" fill="#222" text-anchor="start" font-family="Liberation Serif, serif" font-style="italic" stroke="#222" stroke-width="0.35">x</text>
<path d="M157.8 745.3 Q161.4 741.6 165 745.3 Q161.4 748.6 157.8 745.3 Z" fill="#e8e4f8" stroke="#4a3c9c" stroke-width="0.8"/>
<circle cx="161.4" cy="745.2" r="1.5" fill="#3a3ab0"/>
<rect x="210.2" y="366.6" width="20.8" height="17.6" fill="#cce4f7" />
<rect x="240" y="366.6" width="21" height="17.6" fill="#cce4f7" />
<rect x="264" y="366.6" width="21" height="17.6" fill="#cce4f7" />
<rect x="288" y="366.6" width="21" height="17.6" fill="#cce4f7" />
<rect x="317.6" y="366.6" width="21.2" height="17.6" fill="#cce4f7" />
<rect x="341.6" y="366.6" width="21.2" height="17.6" fill="#cce4f7" />
<rect x="365.6" y="366.6" width="21.2" height="17.6" fill="#cce4f7" />
<rect x="395.6" y="366.6" width="21.0" height="17.6" fill="#cce4f7" />
<line x1="214.5" y1="369.6" x2="221" y2="369.6" stroke="#2f7d5b" stroke-width="1.5" />
<line x1="214.5" y1="373.8" x2="221" y2="373.8" stroke="#2f7d5b" stroke-width="1.5" />
<line x1="218.4" y1="371.8" x2="226.4" y2="371.8" stroke="#5a5a5a" stroke-width="1.6" />
<text x="220.2" y="381.2" font-size="6.4" fill="#2f7d5b" text-anchor="middle" stroke="none">N</text>
<line x1="245.6" y1="368.8" x2="245.6" y2="374.8" stroke="#2f7d5b" stroke-width="1.4" />
<line x1="248.1" y1="368.8" x2="248.1" y2="374.8" stroke="#2f7d5b" stroke-width="1.4" />
<line x1="248.8" y1="371.8" x2="256.2" y2="371.8" stroke="#5a5a5a" stroke-width="1.6" />
<text x="247.6" y="381" font-size="6.4" fill="#2f7d5b" text-anchor="start" stroke="none">V</text>
<text x="251.6" y="381.8" font-size="5.6" fill="#2f7d5b" text-anchor="start" stroke="none">y</text>
<line x1="269.6" y1="368.8" x2="269.6" y2="374.8" stroke="#2f7d5b" stroke-width="1.4" />
<line x1="272.1" y1="368.8" x2="272.1" y2="374.8" stroke="#2f7d5b" stroke-width="1.4" />
<line x1="272.8" y1="371.8" x2="280.2" y2="371.8" stroke="#5a5a5a" stroke-width="1.6" />
<text x="271.6" y="381" font-size="6.4" fill="#2f7d5b" text-anchor="start" stroke="none">V</text>
<text x="275.6" y="381.8" font-size="5.6" fill="#2f7d5b" text-anchor="start" stroke="none">z</text>
<line x1="293.6" y1="368.8" x2="293.6" y2="374.8" stroke="#2f7d5b" stroke-width="1.4" />
<line x1="296.1" y1="368.8" x2="296.1" y2="374.8" stroke="#2f7d5b" stroke-width="1.4" />
<line x1="296.8" y1="371.8" x2="304.2" y2="371.8" stroke="#5a5a5a" stroke-width="1.6" />
<text x="292" y="380.6" font-size="5" fill="#2f7d5b" text-anchor="start" stroke="none">V</text>
<text x="295.1" y="381.4" font-size="4.2" fill="#2f7d5b" text-anchor="start" stroke="none">y+V</text>
<text x="302.6" y="381.8" font-size="4" fill="#2f7d5b" text-anchor="start" stroke="none">z</text>
<line x1="322.5" y1="368.8" x2="322.5" y2="374.8" stroke="#4a4a4a" stroke-width="1.4" />
<circle cx="325.40000000000003" cy="371.8" r="1.5" fill="#cfe8dc" stroke="#2f7d5b" stroke-width="0.9"/>
<line x1="327.0" y1="371.8" x2="334.0" y2="371.8" stroke="#5a5a5a" stroke-width="1.6" />
<text x="323.0" y="381" font-size="6.4" fill="#2f7d5b" text-anchor="start" stroke="none" font-style="italic">M</text>
<text x="328.40000000000003" y="381.8" font-size="5.6" fill="#2f7d5b" text-anchor="start" stroke="none" font-style="italic">y</text>
<line x1="346.5" y1="368.8" x2="346.5" y2="374.8" stroke="#4a4a4a" stroke-width="1.4" />
<circle cx="349.40000000000003" cy="371.8" r="1.5" fill="#cfe8dc" stroke="#2f7d5b" stroke-width="0.9"/>
<line x1="351.0" y1="371.8" x2="358.0" y2="371.8" stroke="#5a5a5a" stroke-width="1.6" />
<text x="347.0" y="381" font-size="6.4" fill="#2f7d5b" text-anchor="start" stroke="none" font-style="italic">M</text>
<text x="352.40000000000003" y="381.8" font-size="5.6" fill="#2f7d5b" text-anchor="start" stroke="none" font-style="italic">z</text>
<line x1="370.5" y1="368.8" x2="370.5" y2="374.8" stroke="#4a4a4a" stroke-width="1.4" />
<circle cx="373.40000000000003" cy="371.8" r="1.5" fill="#cfe8dc" stroke="#2f7d5b" stroke-width="0.9"/>
<line x1="375.0" y1="371.8" x2="382.0" y2="371.8" stroke="#5a5a5a" stroke-width="1.6" />
<text x="369.0" y="380.8" font-size="5.6" fill="#2f7d5b" text-anchor="start" stroke="none">M</text>
<text x="373.8" y="381.6" font-size="4.6" fill="#2f7d5b" text-anchor="start" stroke="none">y+z</text>
<line x1="400" y1="369.9" x2="406.6" y2="369.9" stroke="#2f7d5b" stroke-width="1.5" />
<line x1="400" y1="374" x2="406.6" y2="374" stroke="#2f7d5b" stroke-width="1.5" />
<line x1="403.3" y1="371.9" x2="411.8" y2="371.9" stroke="#5a5a5a" stroke-width="1.6" />
<text x="405.2" y="381" font-size="6" fill="#2f7d5b" text-anchor="start" stroke="none">-</text>
</svg>
</body></html>
